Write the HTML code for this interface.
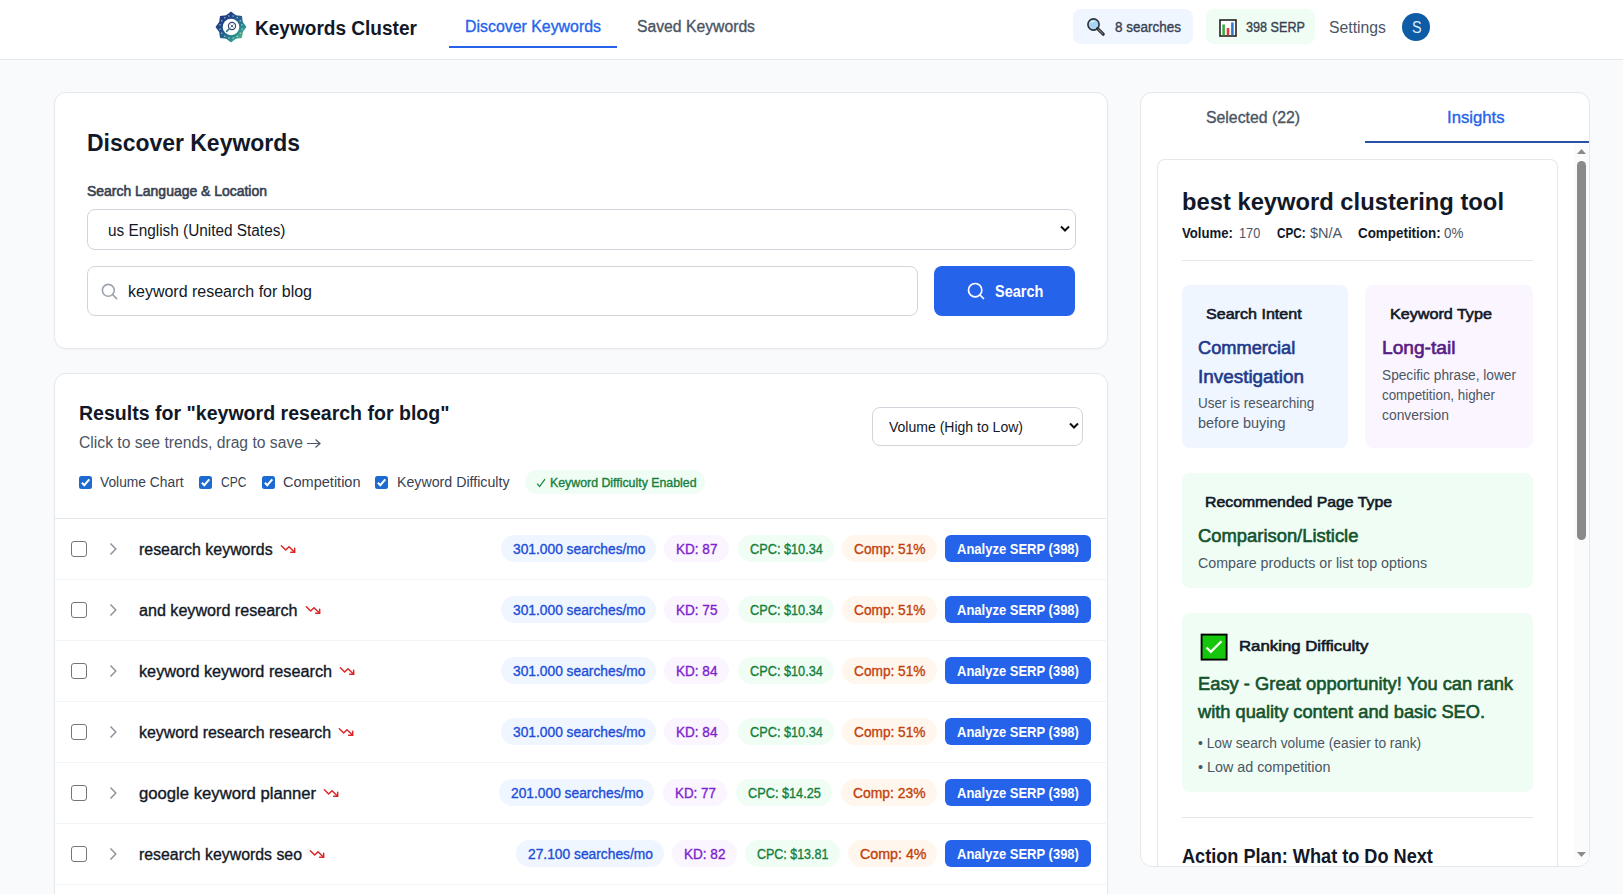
<!DOCTYPE html>
<html><head><meta charset="utf-8"><style>
html,body{margin:0;padding:0;}
body{width:1623px;height:894px;overflow:hidden;background:#f9fafb;position:relative;font-family:"Liberation Sans", sans-serif;}
.a{position:absolute;box-sizing:content-box;}
.t{position:absolute;white-space:nowrap;line-height:1;transform-origin:0 0;}
</style></head><body>
<div class="a" style="left:0px;top:0px;width:1623px;height:59px;background:#fff;"></div>
<div class="a" style="left:0px;top:59px;width:1623px;height:1px;background:#e5e7eb;"></div>
<svg class="a" style="left:213.5px;top:9.5px" width="34" height="34" viewBox="0 0 34 34">
<defs><linearGradient id="lg" x1="0.1" y1="0.1" x2="0.9" y2="0.9"><stop offset="0" stop-color="#1d2f7c"/><stop offset="0.45" stop-color="#20588f"/><stop offset="0.75" stop-color="#2b8f8f"/><stop offset="1" stop-color="#6cc48a"/></linearGradient></defs>
<polygon points="17.00,1.50 21.90,5.17 27.96,6.04 28.83,12.10 32.50,17.00 28.83,21.90 27.96,27.96 21.90,28.83 17.00,32.50 12.10,28.83 6.04,27.96 5.17,21.90 1.50,17.00 5.17,12.10 6.04,6.04 12.10,5.17" fill="url(#lg)"/>
<circle cx="17" cy="17" r="8.3" fill="#fff"/>
<rect x="18.49" y="5.32" width="1.4" height="1.4" fill="#fff" opacity="0.55"/><rect x="22.52" y="6.99" width="1.4" height="1.4" fill="#fff" opacity="0.55"/><rect x="25.61" y="10.08" width="1.4" height="1.4" fill="#fff" opacity="0.55"/><rect x="27.28" y="14.11" width="1.4" height="1.4" fill="#fff" opacity="0.55"/><rect x="27.28" y="18.49" width="1.4" height="1.4" fill="#fff" opacity="0.55"/><rect x="25.61" y="22.52" width="1.4" height="1.4" fill="#fff" opacity="0.55"/><rect x="22.52" y="25.61" width="1.4" height="1.4" fill="#fff" opacity="0.55"/><rect x="18.49" y="27.28" width="1.4" height="1.4" fill="#fff" opacity="0.55"/><rect x="14.11" y="27.28" width="1.4" height="1.4" fill="#fff" opacity="0.55"/><rect x="10.08" y="25.61" width="1.4" height="1.4" fill="#fff" opacity="0.55"/><rect x="6.99" y="22.52" width="1.4" height="1.4" fill="#fff" opacity="0.55"/><rect x="5.32" y="18.49" width="1.4" height="1.4" fill="#fff" opacity="0.55"/><rect x="5.32" y="14.11" width="1.4" height="1.4" fill="#fff" opacity="0.55"/><rect x="6.99" y="10.08" width="1.4" height="1.4" fill="#fff" opacity="0.55"/><rect x="10.08" y="6.99" width="1.4" height="1.4" fill="#fff" opacity="0.55"/><rect x="14.11" y="5.32" width="1.4" height="1.4" fill="#fff" opacity="0.55"/>
<circle cx="18" cy="16" r="3.6" fill="none" stroke="#34457e" stroke-width="1.2"/>
<path d="M16.6 14.6 L19.4 17.4 M19.4 14.6 L16.6 17.4" stroke="#34457e" stroke-width="0.8"/>
<line x1="15.4" y1="18.6" x2="12.6" y2="21.4" stroke="#2f7f8a" stroke-width="1.5" stroke-linecap="round"/>
</svg>
<span id="t0" class="t" style="left:255.0px;top:18.00px;font-size:20px;font-weight:700;color:#111827;transform:scaleX(0.9523);">Keywords Cluster</span>
<span id="t1" class="t" style="left:465.0px;top:19.00px;font-size:16px;font-weight:400;color:#2563eb;transform:scaleX(0.9931);-webkit-text-stroke:0.35px currentColor;">Discover Keywords</span>
<div class="a" style="left:449px;top:46px;width:168px;height:2px;background:#2563eb;"></div>
<span id="t2" class="t" style="left:637.0px;top:19.00px;font-size:16px;font-weight:400;color:#4b5563;transform:scaleX(0.9827);-webkit-text-stroke:0.35px currentColor;">Saved Keywords</span>
<div class="a" style="left:1073px;top:9px;width:120px;height:35px;background:#eff6ff;border-radius:8px;"></div>
<svg class="a" style="left:1086px;top:17px" width="20" height="20" viewBox="0 0 20 20">
<circle cx="7.5" cy="7.5" r="5.6" fill="#a8d4f5" stroke="#2b2f36" stroke-width="1.6"/>
<path d="M5 5.5 Q6.5 4 8.5 4.5" stroke="#e8f4fd" stroke-width="1.2" fill="none"/>
<line x1="11.6" y1="11.6" x2="17.2" y2="17.2" stroke="#2b2f36" stroke-width="3.2" stroke-linecap="round"/>
<line x1="12.5" y1="12.5" x2="16.6" y2="16.6" stroke="#777" stroke-width="1.2" stroke-linecap="round"/>
</svg>
<span id="t3" class="t" style="left:1115.0px;top:20.00px;font-size:14px;font-weight:400;color:#374151;transform:scaleX(0.9632);-webkit-text-stroke:0.35px currentColor;">8 searches</span>
<div class="a" style="left:1206px;top:9px;width:109px;height:35px;background:#f0fdf4;border-radius:8px;"></div>
<svg class="a" style="left:1218.5px;top:18.5px" width="18" height="18" viewBox="0 0 18 18">
<rect x="1" y="1" width="16" height="16" fill="#fff" stroke="#222" stroke-width="1.6"/>
<rect x="3.3" y="5.5" width="2.6" height="10.7" fill="#3aa845"/>
<rect x="7.7" y="9" width="2.6" height="7.2" fill="#e33b3b"/>
<rect x="12.1" y="3.5" width="2.6" height="12.7" fill="#2f7ad6"/>
</svg>
<span id="t4" class="t" style="left:1246.0px;top:20.00px;font-size:14px;font-weight:400;color:#374151;transform:scaleX(0.9010);-webkit-text-stroke:0.35px currentColor;">398 SERP</span>
<span id="t5" class="t" style="left:1329.0px;top:20.00px;font-size:16px;font-weight:400;color:#4b5563;transform:scaleX(0.9857);">Settings</span>
<div class="a" style="left:1402px;top:13px;width:28px;height:28px;background:#0e5ba6;border-radius:50%;"></div>
<span id="t6" class="t" style="left:1411.5px;top:20.00px;font-size:16px;font-weight:400;color:#dcedff;transform:scaleX(0.8995);">S</span>
<div class="a" style="left:54px;top:92px;width:1052px;height:255px;background:#fff;border:1px solid #e5e7eb;border-radius:12px;box-shadow:0 1px 2px rgba(0,0,0,0.03);"></div>
<span id="t7" class="t" style="left:87.0px;top:131.00px;font-size:24px;font-weight:700;color:#111827;transform:scaleX(0.9560);">Discover Keywords</span>
<span id="t8" class="t" style="left:87.0px;top:184.00px;font-size:14px;font-weight:400;color:#374151;transform:scaleX(0.9967);-webkit-text-stroke:0.6px currentColor;">Search Language &amp; Location</span>
<div class="a" style="left:87px;top:209px;width:987px;height:39px;background:#fff;border:1px solid #d1d5db;border-radius:8px;"></div>
<span id="t9" class="t" style="left:108.0px;top:223.00px;font-size:16px;font-weight:400;color:#111827;transform:scaleX(0.9593);">us English (United States)</span>
<svg class="a" style="left:1059px;top:224px" width="12" height="10" viewBox="0 0 12 10"><path d="M2 2.5 L6 6.5 L10 2.5" fill="none" stroke="#111" stroke-width="2"/></svg>
<div class="a" style="left:87px;top:266px;width:829px;height:48px;background:#fff;border:1px solid #d1d5db;border-radius:8px;"></div>
<svg class="a" style="left:100px;top:282px" width="19" height="19" viewBox="0 0 24 24"><circle cx="10.5" cy="10.5" r="7.5" fill="none" stroke="#9ca3af" stroke-width="2"/><line x1="16" y1="16" x2="21" y2="21" stroke="#9ca3af" stroke-width="2" stroke-linecap="round"/></svg>
<span id="t10" class="t" style="left:128.0px;top:284.00px;font-size:16px;font-weight:400;color:#111827;transform:scaleX(0.9995);">keyword research for blog</span>
<div class="a" style="left:934px;top:266px;width:141px;height:50px;background:#2563eb;border-radius:8px;"></div>
<svg class="a" style="left:966px;top:281px" width="20" height="20" viewBox="0 0 24 24"><circle cx="11" cy="11" r="8" fill="none" stroke="#fff" stroke-width="2"/><line x1="16.8" y1="16.8" x2="21" y2="21" stroke="#fff" stroke-width="2" stroke-linecap="round"/></svg>
<span id="t11" class="t" style="left:995.0px;top:284.00px;font-size:16px;font-weight:700;color:#ffffff;transform:scaleX(0.9069);">Search</span>
<div class="a" style="left:54px;top:373px;width:1052px;height:560px;background:#fff;border:1px solid #e5e7eb;border-radius:12px;box-shadow:0 1px 2px rgba(0,0,0,0.03);"></div>
<span id="t12" class="t" style="left:79.0px;top:403.00px;font-size:20px;font-weight:700;color:#111827;transform:scaleX(0.9774);">Results for "keyword research for blog"</span>
<span id="t13" class="t" style="left:79.0px;top:435.00px;font-size:16px;font-weight:400;color:#4b5563;transform:scaleX(0.9800);">Click to see trends, drag to save</span>
<svg class="a" style="left:306px;top:438px" width="16" height="11" viewBox="0 0 16 11"><path d="M1 5.5 L14 5.5 M9.5 1.5 L14 5.5 L9.5 9.5" fill="none" stroke="#4b5563" stroke-width="1.2"/></svg>
<div class="a" style="left:872px;top:407px;width:209px;height:37px;background:#fff;border:1px solid #d1d5db;border-radius:8px;"></div>
<span id="t14" class="t" style="left:889.0px;top:420.00px;font-size:14px;font-weight:400;color:#111827;transform:scaleX(1.0012);">Volume (High to Low)</span>
<svg class="a" style="left:1068px;top:421px" width="12" height="10" viewBox="0 0 12 10"><path d="M2 2.5 L6 6.5 L10 2.5" fill="none" stroke="#111" stroke-width="2"/></svg>
<svg class="a" style="left:79px;top:476px" width="13" height="13" viewBox="0 0 13 13"><rect x="0" y="0" width="13" height="13" rx="2.5" fill="#1b6bd0"/><path d="M2.9 6.7 L5.3 9.2 L10.3 3.4" fill="none" stroke="#fff" stroke-width="2.1"/></svg>
<span id="t15" class="t" style="left:100.0px;top:475.00px;font-size:14px;font-weight:400;color:#374151;transform:scaleX(0.9853);">Volume Chart</span>
<svg class="a" style="left:199px;top:476px" width="13" height="13" viewBox="0 0 13 13"><rect x="0" y="0" width="13" height="13" rx="2.5" fill="#1b6bd0"/><path d="M2.9 6.7 L5.3 9.2 L10.3 3.4" fill="none" stroke="#fff" stroke-width="2.1"/></svg>
<span id="t16" class="t" style="left:220.5px;top:475.00px;font-size:14px;font-weight:400;color:#374151;transform:scaleX(0.8578);">CPC</span>
<svg class="a" style="left:262px;top:476px" width="13" height="13" viewBox="0 0 13 13"><rect x="0" y="0" width="13" height="13" rx="2.5" fill="#1b6bd0"/><path d="M2.9 6.7 L5.3 9.2 L10.3 3.4" fill="none" stroke="#fff" stroke-width="2.1"/></svg>
<span id="t17" class="t" style="left:282.5px;top:475.00px;font-size:14px;font-weight:400;color:#374151;transform:scaleX(1.0379);">Competition</span>
<svg class="a" style="left:375px;top:476px" width="13" height="13" viewBox="0 0 13 13"><rect x="0" y="0" width="13" height="13" rx="2.5" fill="#1b6bd0"/><path d="M2.9 6.7 L5.3 9.2 L10.3 3.4" fill="none" stroke="#fff" stroke-width="2.1"/></svg>
<span id="t18" class="t" style="left:397.0px;top:475.00px;font-size:14px;font-weight:400;color:#374151;transform:scaleX(1.0135);">Keyword Difficulty</span>
<div class="a" style="left:525px;top:470px;width:180px;height:24px;background:#f0fdf4;border-radius:12px;"></div>
<svg class="a" style="left:536px;top:478px" width="10" height="10" viewBox="0 0 10 10"><path d="M1.2 5.6 L3.6 8.6 L9 1.2" fill="none" stroke="#15803d" stroke-width="1.2"/></svg>
<span id="t19" class="t" style="left:549.5px;top:477.00px;font-size:12px;font-weight:400;color:#15803d;transform:scaleX(1.0280);-webkit-text-stroke:0.35px currentColor;">Keyword Difficulty Enabled</span>
<div class="a" style="left:55px;top:518px;width:1051px;height:1px;background:#e5e7eb;"></div>
<div class="a" style="left:55px;top:579px;width:1051px;height:1px;background:#f3f4f6;"></div>
<div class="a" style="left:71px;top:541px;width:14px;height:14px;border:1px solid #767676;border-radius:3px;background:#fff;"></div>
<svg class="a" style="left:107px;top:541px" width="12" height="16" viewBox="0 0 12 16"><path d="M3.5 2.5 L8.8 8 L3.5 13.5" fill="none" stroke="#8b8f96" stroke-width="1.4"/></svg>
<span id="t20" class="t" style="left:139.0px;top:542.00px;font-size:16px;font-weight:400;color:#111827;transform:scaleX(0.9949);-webkit-text-stroke:0.35px currentColor;">research keywords</span>
<svg class="a" style="left:279.6px;top:541px" width="16" height="16" viewBox="0 0 24 24"><polyline points="22 17 13.5 8.5 8.5 13.5 2 7" fill="none" stroke="#dc2626" stroke-width="2.2" stroke-linecap="round" stroke-linejoin="round"/><polyline points="16 17 22 17 22 11" fill="none" stroke="#dc2626" stroke-width="2.2" stroke-linecap="round" stroke-linejoin="round"/></svg>
<div class="a" style="left:500.5px;top:535px;width:155.5px;height:27px;background:#eff6ff;border-radius:14px;"></div>
<span id="t21" class="t" style="left:512.5px;top:542.00px;font-size:14px;font-weight:400;color:#1d4ed8;transform:scaleX(0.9840);-webkit-text-stroke:0.35px currentColor;">301.000 searches/mo</span>
<div class="a" style="left:664px;top:535px;width:64.5px;height:27px;background:#faf5ff;border-radius:14px;"></div>
<span id="t22" class="t" style="left:676.0px;top:542.00px;font-size:14px;font-weight:400;color:#7e22ce;transform:scaleX(0.9686);-webkit-text-stroke:0.35px currentColor;">KD: 87</span>
<div class="a" style="left:738px;top:535px;width:96px;height:27px;background:#f0fdf4;border-radius:14px;"></div>
<span id="t23" class="t" style="left:750.0px;top:542.00px;font-size:14px;font-weight:400;color:#15803d;transform:scaleX(0.9094);-webkit-text-stroke:0.35px currentColor;">CPC: $10.34</span>
<div class="a" style="left:842px;top:535px;width:94.5px;height:27px;background:#fff7ed;border-radius:14px;"></div>
<span id="t24" class="t" style="left:854.0px;top:542.00px;font-size:14px;font-weight:400;color:#c2410c;transform:scaleX(0.9770);-webkit-text-stroke:0.35px currentColor;">Comp: 51%</span>
<div class="a" style="left:945px;top:535px;width:146px;height:27px;background:#2563eb;border-radius:6px;"></div>
<span id="t25" class="t" style="left:957.3px;top:542.00px;font-size:14px;font-weight:700;color:#ffffff;transform:scaleX(0.9290);">Analyze SERP (398)</span>
<div class="a" style="left:55px;top:640px;width:1051px;height:1px;background:#f3f4f6;"></div>
<div class="a" style="left:71px;top:602px;width:14px;height:14px;border:1px solid #767676;border-radius:3px;background:#fff;"></div>
<svg class="a" style="left:107px;top:602px" width="12" height="16" viewBox="0 0 12 16"><path d="M3.5 2.5 L8.8 8 L3.5 13.5" fill="none" stroke="#8b8f96" stroke-width="1.4"/></svg>
<span id="t26" class="t" style="left:139.0px;top:603.00px;font-size:16px;font-weight:400;color:#111827;transform:scaleX(1.0069);-webkit-text-stroke:0.35px currentColor;">and keyword research</span>
<svg class="a" style="left:304.5px;top:602px" width="16" height="16" viewBox="0 0 24 24"><polyline points="22 17 13.5 8.5 8.5 13.5 2 7" fill="none" stroke="#dc2626" stroke-width="2.2" stroke-linecap="round" stroke-linejoin="round"/><polyline points="16 17 22 17 22 11" fill="none" stroke="#dc2626" stroke-width="2.2" stroke-linecap="round" stroke-linejoin="round"/></svg>
<div class="a" style="left:500.5px;top:596px;width:155.5px;height:27px;background:#eff6ff;border-radius:14px;"></div>
<span id="t27" class="t" style="left:512.5px;top:603.00px;font-size:14px;font-weight:400;color:#1d4ed8;transform:scaleX(0.9840);-webkit-text-stroke:0.35px currentColor;">301.000 searches/mo</span>
<div class="a" style="left:664px;top:596px;width:64.5px;height:27px;background:#faf5ff;border-radius:14px;"></div>
<span id="t28" class="t" style="left:676.0px;top:603.00px;font-size:14px;font-weight:400;color:#7e22ce;transform:scaleX(0.9686);-webkit-text-stroke:0.35px currentColor;">KD: 75</span>
<div class="a" style="left:738px;top:596px;width:96px;height:27px;background:#f0fdf4;border-radius:14px;"></div>
<span id="t29" class="t" style="left:750.0px;top:603.00px;font-size:14px;font-weight:400;color:#15803d;transform:scaleX(0.9094);-webkit-text-stroke:0.35px currentColor;">CPC: $10.34</span>
<div class="a" style="left:842px;top:596px;width:94.5px;height:27px;background:#fff7ed;border-radius:14px;"></div>
<span id="t30" class="t" style="left:854.0px;top:603.00px;font-size:14px;font-weight:400;color:#c2410c;transform:scaleX(0.9770);-webkit-text-stroke:0.35px currentColor;">Comp: 51%</span>
<div class="a" style="left:945px;top:596px;width:146px;height:27px;background:#2563eb;border-radius:6px;"></div>
<span id="t31" class="t" style="left:957.3px;top:603.00px;font-size:14px;font-weight:700;color:#ffffff;transform:scaleX(0.9290);">Analyze SERP (398)</span>
<div class="a" style="left:55px;top:701px;width:1051px;height:1px;background:#f3f4f6;"></div>
<div class="a" style="left:71px;top:663px;width:14px;height:14px;border:1px solid #767676;border-radius:3px;background:#fff;"></div>
<svg class="a" style="left:107px;top:663px" width="12" height="16" viewBox="0 0 12 16"><path d="M3.5 2.5 L8.8 8 L3.5 13.5" fill="none" stroke="#8b8f96" stroke-width="1.4"/></svg>
<span id="t32" class="t" style="left:139.0px;top:664.00px;font-size:16px;font-weight:400;color:#111827;transform:scaleX(1.0143);-webkit-text-stroke:0.35px currentColor;">keyword keyword research</span>
<svg class="a" style="left:339.0px;top:663px" width="16" height="16" viewBox="0 0 24 24"><polyline points="22 17 13.5 8.5 8.5 13.5 2 7" fill="none" stroke="#dc2626" stroke-width="2.2" stroke-linecap="round" stroke-linejoin="round"/><polyline points="16 17 22 17 22 11" fill="none" stroke="#dc2626" stroke-width="2.2" stroke-linecap="round" stroke-linejoin="round"/></svg>
<div class="a" style="left:500.5px;top:657px;width:155.5px;height:27px;background:#eff6ff;border-radius:14px;"></div>
<span id="t33" class="t" style="left:512.5px;top:664.00px;font-size:14px;font-weight:400;color:#1d4ed8;transform:scaleX(0.9840);-webkit-text-stroke:0.35px currentColor;">301.000 searches/mo</span>
<div class="a" style="left:664px;top:657px;width:64.5px;height:27px;background:#faf5ff;border-radius:14px;"></div>
<span id="t34" class="t" style="left:676.0px;top:664.00px;font-size:14px;font-weight:400;color:#7e22ce;transform:scaleX(0.9686);-webkit-text-stroke:0.35px currentColor;">KD: 84</span>
<div class="a" style="left:738px;top:657px;width:96px;height:27px;background:#f0fdf4;border-radius:14px;"></div>
<span id="t35" class="t" style="left:750.0px;top:664.00px;font-size:14px;font-weight:400;color:#15803d;transform:scaleX(0.9094);-webkit-text-stroke:0.35px currentColor;">CPC: $10.34</span>
<div class="a" style="left:842px;top:657px;width:94.5px;height:27px;background:#fff7ed;border-radius:14px;"></div>
<span id="t36" class="t" style="left:854.0px;top:664.00px;font-size:14px;font-weight:400;color:#c2410c;transform:scaleX(0.9770);-webkit-text-stroke:0.35px currentColor;">Comp: 51%</span>
<div class="a" style="left:945px;top:657px;width:146px;height:27px;background:#2563eb;border-radius:6px;"></div>
<span id="t37" class="t" style="left:957.3px;top:664.00px;font-size:14px;font-weight:700;color:#ffffff;transform:scaleX(0.9290);">Analyze SERP (398)</span>
<div class="a" style="left:55px;top:762px;width:1051px;height:1px;background:#f3f4f6;"></div>
<div class="a" style="left:71px;top:724px;width:14px;height:14px;border:1px solid #767676;border-radius:3px;background:#fff;"></div>
<svg class="a" style="left:107px;top:724px" width="12" height="16" viewBox="0 0 12 16"><path d="M3.5 2.5 L8.8 8 L3.5 13.5" fill="none" stroke="#8b8f96" stroke-width="1.4"/></svg>
<span id="t38" class="t" style="left:139.0px;top:725.00px;font-size:16px;font-weight:400;color:#111827;transform:scaleX(0.9950);-webkit-text-stroke:0.35px currentColor;">keyword research research</span>
<svg class="a" style="left:338.0px;top:724px" width="16" height="16" viewBox="0 0 24 24"><polyline points="22 17 13.5 8.5 8.5 13.5 2 7" fill="none" stroke="#dc2626" stroke-width="2.2" stroke-linecap="round" stroke-linejoin="round"/><polyline points="16 17 22 17 22 11" fill="none" stroke="#dc2626" stroke-width="2.2" stroke-linecap="round" stroke-linejoin="round"/></svg>
<div class="a" style="left:500.5px;top:718px;width:155.5px;height:27px;background:#eff6ff;border-radius:14px;"></div>
<span id="t39" class="t" style="left:512.5px;top:725.00px;font-size:14px;font-weight:400;color:#1d4ed8;transform:scaleX(0.9840);-webkit-text-stroke:0.35px currentColor;">301.000 searches/mo</span>
<div class="a" style="left:664px;top:718px;width:64.5px;height:27px;background:#faf5ff;border-radius:14px;"></div>
<span id="t40" class="t" style="left:676.0px;top:725.00px;font-size:14px;font-weight:400;color:#7e22ce;transform:scaleX(0.9686);-webkit-text-stroke:0.35px currentColor;">KD: 84</span>
<div class="a" style="left:738px;top:718px;width:96px;height:27px;background:#f0fdf4;border-radius:14px;"></div>
<span id="t41" class="t" style="left:750.0px;top:725.00px;font-size:14px;font-weight:400;color:#15803d;transform:scaleX(0.9094);-webkit-text-stroke:0.35px currentColor;">CPC: $10.34</span>
<div class="a" style="left:842px;top:718px;width:94.5px;height:27px;background:#fff7ed;border-radius:14px;"></div>
<span id="t42" class="t" style="left:854.0px;top:725.00px;font-size:14px;font-weight:400;color:#c2410c;transform:scaleX(0.9770);-webkit-text-stroke:0.35px currentColor;">Comp: 51%</span>
<div class="a" style="left:945px;top:718px;width:146px;height:27px;background:#2563eb;border-radius:6px;"></div>
<span id="t43" class="t" style="left:957.3px;top:725.00px;font-size:14px;font-weight:700;color:#ffffff;transform:scaleX(0.9290);">Analyze SERP (398)</span>
<div class="a" style="left:55px;top:823px;width:1051px;height:1px;background:#f3f4f6;"></div>
<div class="a" style="left:71px;top:785px;width:14px;height:14px;border:1px solid #767676;border-radius:3px;background:#fff;"></div>
<svg class="a" style="left:107px;top:785px" width="12" height="16" viewBox="0 0 12 16"><path d="M3.5 2.5 L8.8 8 L3.5 13.5" fill="none" stroke="#8b8f96" stroke-width="1.4"/></svg>
<span id="t44" class="t" style="left:139.0px;top:786.00px;font-size:16px;font-weight:400;color:#111827;transform:scaleX(1.0421);-webkit-text-stroke:0.35px currentColor;">google keyword planner</span>
<svg class="a" style="left:323.0px;top:785px" width="16" height="16" viewBox="0 0 24 24"><polyline points="22 17 13.5 8.5 8.5 13.5 2 7" fill="none" stroke="#dc2626" stroke-width="2.2" stroke-linecap="round" stroke-linejoin="round"/><polyline points="16 17 22 17 22 11" fill="none" stroke="#dc2626" stroke-width="2.2" stroke-linecap="round" stroke-linejoin="round"/></svg>
<div class="a" style="left:498.5px;top:779px;width:155.5px;height:27px;background:#eff6ff;border-radius:14px;"></div>
<span id="t45" class="t" style="left:510.5px;top:786.00px;font-size:14px;font-weight:400;color:#1d4ed8;transform:scaleX(0.9840);-webkit-text-stroke:0.35px currentColor;">201.000 searches/mo</span>
<div class="a" style="left:663px;top:779px;width:64px;height:27px;background:#faf5ff;border-radius:14px;"></div>
<span id="t46" class="t" style="left:675.0px;top:786.00px;font-size:14px;font-weight:400;color:#7e22ce;transform:scaleX(0.9567);-webkit-text-stroke:0.35px currentColor;">KD: 77</span>
<div class="a" style="left:735.5px;top:779px;width:96px;height:27px;background:#f0fdf4;border-radius:14px;"></div>
<span id="t47" class="t" style="left:747.5px;top:786.00px;font-size:14px;font-weight:400;color:#15803d;transform:scaleX(0.9094);-webkit-text-stroke:0.35px currentColor;">CPC: $14.25</span>
<div class="a" style="left:841px;top:779px;width:95.5px;height:27px;background:#fff7ed;border-radius:14px;"></div>
<span id="t48" class="t" style="left:853.0px;top:786.00px;font-size:14px;font-weight:400;color:#c2410c;transform:scaleX(0.9909);-webkit-text-stroke:0.35px currentColor;">Comp: 23%</span>
<div class="a" style="left:945px;top:779px;width:146px;height:27px;background:#2563eb;border-radius:6px;"></div>
<span id="t49" class="t" style="left:957.3px;top:786.00px;font-size:14px;font-weight:700;color:#ffffff;transform:scaleX(0.9290);">Analyze SERP (398)</span>
<div class="a" style="left:55px;top:884px;width:1051px;height:1px;background:#f3f4f6;"></div>
<div class="a" style="left:71px;top:846px;width:14px;height:14px;border:1px solid #767676;border-radius:3px;background:#fff;"></div>
<svg class="a" style="left:107px;top:846px" width="12" height="16" viewBox="0 0 12 16"><path d="M3.5 2.5 L8.8 8 L3.5 13.5" fill="none" stroke="#8b8f96" stroke-width="1.4"/></svg>
<span id="t50" class="t" style="left:139.0px;top:847.00px;font-size:16px;font-weight:400;color:#111827;transform:scaleX(0.9907);-webkit-text-stroke:0.35px currentColor;">research keywords seo</span>
<svg class="a" style="left:309.0px;top:846px" width="16" height="16" viewBox="0 0 24 24"><polyline points="22 17 13.5 8.5 8.5 13.5 2 7" fill="none" stroke="#dc2626" stroke-width="2.2" stroke-linecap="round" stroke-linejoin="round"/><polyline points="16 17 22 17 22 11" fill="none" stroke="#dc2626" stroke-width="2.2" stroke-linecap="round" stroke-linejoin="round"/></svg>
<div class="a" style="left:515.5px;top:840px;width:148px;height:27px;background:#eff6ff;border-radius:14px;"></div>
<span id="t51" class="t" style="left:527.5px;top:847.00px;font-size:14px;font-weight:400;color:#1d4ed8;transform:scaleX(0.9852);-webkit-text-stroke:0.35px currentColor;">27.100 searches/mo</span>
<div class="a" style="left:672px;top:840px;width:64.5px;height:27px;background:#faf5ff;border-radius:14px;"></div>
<span id="t52" class="t" style="left:684.0px;top:847.00px;font-size:14px;font-weight:400;color:#7e22ce;transform:scaleX(0.9686);-webkit-text-stroke:0.35px currentColor;">KD: 82</span>
<div class="a" style="left:745px;top:840px;width:94.5px;height:27px;background:#f0fdf4;border-radius:14px;"></div>
<span id="t53" class="t" style="left:757.0px;top:847.00px;font-size:14px;font-weight:400;color:#15803d;transform:scaleX(0.8905);-webkit-text-stroke:0.35px currentColor;">CPC: $13.81</span>
<div class="a" style="left:847.5px;top:840px;width:89.5px;height:27px;background:#fff7ed;border-radius:14px;"></div>
<span id="t54" class="t" style="left:859.5px;top:847.00px;font-size:14px;font-weight:400;color:#c2410c;transform:scaleX(1.0177);-webkit-text-stroke:0.35px currentColor;">Comp: 4%</span>
<div class="a" style="left:945px;top:840px;width:146px;height:27px;background:#2563eb;border-radius:6px;"></div>
<span id="t55" class="t" style="left:957.3px;top:847.00px;font-size:14px;font-weight:700;color:#ffffff;transform:scaleX(0.9290);">Analyze SERP (398)</span>
<div class="a" style="left:1140px;top:92px;width:448px;height:773px;background:#fff;border:1px solid #e5e7eb;border-radius:12px;overflow:hidden;">
</div>
<span id="t56" class="t" style="left:1206.0px;top:110.00px;font-size:16px;font-weight:400;color:#4b5563;transform:scaleX(0.9876);-webkit-text-stroke:0.35px currentColor;">Selected (22)</span>
<span id="t57" class="t" style="left:1447.0px;top:110.00px;font-size:16px;font-weight:400;color:#2563eb;transform:scaleX(1.0436);-webkit-text-stroke:0.35px currentColor;">Insights</span>
<div class="a" style="left:1365px;top:141px;width:224px;height:2px;background:#2b50aa;"></div>
<div class="a" style="left:1574px;top:144px;width:15px;height:716px;background:#fbfbfb;"></div>
<div class="a" style="left:1577px;top:161px;width:9px;height:379px;background:#8a8a8a;border-radius:5px;"></div>
<svg class="a" style="left:1576px;top:147px" width="11" height="8" viewBox="0 0 11 8"><path d="M1 7 L5.5 2 L10 7 Z" fill="#8a8a8a"/></svg>
<svg class="a" style="left:1576px;top:851px" width="11" height="8" viewBox="0 0 11 8"><path d="M1 1 L5.5 6 L10 1 Z" fill="#8a8a8a"/></svg>
<div class="a" style="left:1157px;top:159px;width:399px;height:706px;border:1px solid #e5e7eb;border-bottom:none;border-radius:8px 8px 0 0;background:#fff;"></div>
<span id="t58" class="t" style="left:1182.0px;top:190.00px;font-size:24px;font-weight:700;color:#111827;transform:scaleX(0.9895);">best keyword clustering tool</span>
<span id="t59" class="t" style="left:1182.4px;top:226.00px;font-size:14px;font-weight:700;color:#111827;transform:scaleX(0.9398);">Volume:</span>
<span id="t60" class="t" style="left:1238.8px;top:226.00px;font-size:14px;font-weight:400;color:#4b5563;transform:scaleX(0.9079);">170</span>
<span id="t61" class="t" style="left:1276.7px;top:226.00px;font-size:14px;font-weight:700;color:#111827;transform:scaleX(0.8335);">CPC:</span>
<span id="t62" class="t" style="left:1309.6px;top:226.00px;font-size:14px;font-weight:400;color:#4b5563;transform:scaleX(1.0357);">$N/A</span>
<span id="t63" class="t" style="left:1358.0px;top:226.00px;font-size:14px;font-weight:700;color:#111827;transform:scaleX(0.9575);">Competition:</span>
<span id="t64" class="t" style="left:1444.0px;top:226.00px;font-size:14px;font-weight:400;color:#4b5563;transform:scaleX(0.9566);">0%</span>
<div class="a" style="left:1182px;top:260px;width:351px;height:1px;background:#e5e7eb;"></div>
<div class="a" style="left:1182px;top:285px;width:166px;height:163px;background:#eff6ff;border-radius:8px;"></div>
<span id="t65" class="t" style="left:1206.0px;top:306.00px;font-size:15px;font-weight:400;color:#111827;transform:scaleX(1.0721);-webkit-text-stroke:0.6px currentColor;">Search Intent</span>
<span id="t66" class="t" style="left:1198.0px;top:339.00px;font-size:18px;font-weight:400;color:#1e3a8a;transform:scaleX(1.0125);-webkit-text-stroke:0.6px currentColor;">Commercial</span>
<span id="t67" class="t" style="left:1198.0px;top:368.00px;font-size:18px;font-weight:400;color:#1e3a8a;transform:scaleX(1.0492);-webkit-text-stroke:0.6px currentColor;">Investigation</span>
<span id="t68" class="t" style="left:1198.0px;top:396.00px;font-size:14px;font-weight:400;color:#4b5563;transform:scaleX(0.9631);">User is researching</span>
<span id="t69" class="t" style="left:1198.0px;top:416.00px;font-size:14px;font-weight:400;color:#4b5563;transform:scaleX(1.0317);">before buying</span>
<div class="a" style="left:1365px;top:285px;width:168px;height:163px;background:#faf5ff;border-radius:8px;"></div>
<span id="t70" class="t" style="left:1390.0px;top:306.00px;font-size:15px;font-weight:400;color:#111827;transform:scaleX(1.0748);-webkit-text-stroke:0.6px currentColor;">Keyword Type</span>
<span id="t71" class="t" style="left:1381.5px;top:339.00px;font-size:18px;font-weight:400;color:#581c87;transform:scaleX(1.0640);-webkit-text-stroke:0.6px currentColor;">Long-tail</span>
<span id="t72" class="t" style="left:1381.5px;top:368.00px;font-size:14px;font-weight:400;color:#4b5563;transform:scaleX(0.9783);">Specific phrase, lower</span>
<span id="t73" class="t" style="left:1381.5px;top:388.00px;font-size:14px;font-weight:400;color:#4b5563;transform:scaleX(0.9548);">competition, higher</span>
<span id="t74" class="t" style="left:1381.5px;top:408.00px;font-size:14px;font-weight:400;color:#4b5563;transform:scaleX(0.9895);">conversion</span>
<div class="a" style="left:1182px;top:473px;width:351px;height:115px;background:#f0fdf4;border-radius:8px;"></div>
<span id="t75" class="t" style="left:1205.0px;top:494.00px;font-size:15px;font-weight:400;color:#111827;transform:scaleX(1.0548);-webkit-text-stroke:0.6px currentColor;">Recommended Page Type</span>
<span id="t76" class="t" style="left:1198.0px;top:527.00px;font-size:18px;font-weight:400;color:#14532d;transform:scaleX(1.0214);-webkit-text-stroke:0.6px currentColor;">Comparison/Listicle</span>
<span id="t77" class="t" style="left:1198.0px;top:556.00px;font-size:14px;font-weight:400;color:#4b5563;transform:scaleX(1.0184);">Compare products or list top options</span>
<div class="a" style="left:1182px;top:613px;width:351px;height:179px;background:#f0fdf4;border-radius:8px;"></div>
<svg class="a" style="left:1200px;top:632.5px" width="28" height="28" viewBox="0 0 28 28">
<rect x="1.6" y="1.6" width="25" height="25" fill="#16c60c" stroke="#000" stroke-width="1.9"/>
<path d="M6.5 14.5 L10.8 18.8 L21.5 8.2" fill="none" stroke="#f4fff0" stroke-width="2.3"/></svg>
<span id="t78" class="t" style="left:1239.3px;top:638.00px;font-size:15px;font-weight:400;color:#111827;transform:scaleX(1.1186);-webkit-text-stroke:0.6px currentColor;">Ranking Difficulty</span>
<span id="t79" class="t" style="left:1198.0px;top:675.00px;font-size:18px;font-weight:400;color:#14532d;transform:scaleX(1.0189);-webkit-text-stroke:0.6px currentColor;">Easy - Great opportunity! You can rank</span>
<span id="t80" class="t" style="left:1198.0px;top:703.00px;font-size:18px;font-weight:400;color:#14532d;transform:scaleX(1.0136);-webkit-text-stroke:0.6px currentColor;">with quality content and basic SEO.</span>
<span id="t81" class="t" style="left:1198.0px;top:736.00px;font-size:14px;font-weight:400;color:#4b5563;transform:scaleX(0.9812);">• Low search volume (easier to rank)</span>
<span id="t82" class="t" style="left:1198.0px;top:760.00px;font-size:14px;font-weight:400;color:#4b5563;transform:scaleX(1.0232);">• Low ad competition</span>
<div class="a" style="left:1182px;top:817px;width:351px;height:1px;background:#e5e7eb;"></div>
<div class="a" style="left:1141px;top:840px;width:430px;height:26px;overflow:hidden;">
<span id="t83" class="t" style="left:41.0px;top:6.00px;font-size:20px;font-weight:700;color:#111827;transform:scaleX(0.9069);">Action Plan: What to Do Next</span>
</div>
</body></html>
